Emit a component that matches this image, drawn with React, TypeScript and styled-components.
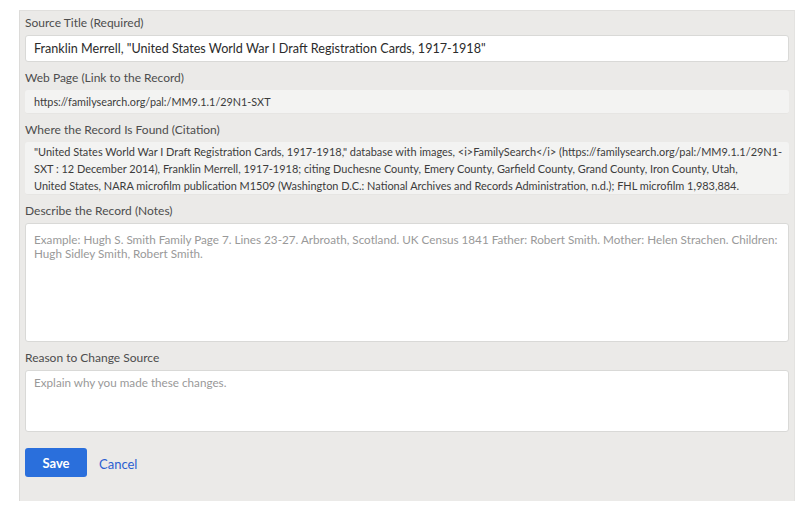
import React from 'react'
import styled, { createGlobalStyle } from 'styled-components'

const GlobalStyle = createGlobalStyle`
  html, body {
    margin: 0;
    padding: 0;
    background: #fff;
    font-family: Lato, "Open Sans", "Liberation Sans", sans-serif;
  }
`

const citationLines = [
  '"United States World War I Draft Registration Cards, 1917-1918," database with images, <i>FamilySearch</i> (https://familysearch.org/pal:/MM9.1.1/29N1-',
  'SXT : 12 December 2014), Franklin Merrell, 1917-1918; citing Duchesne County, Emery County, Garfield County, Grand County, Iron County, Utah,',
  'United States, NARA microfilm publication M1509 (Washington D.C.: National Archives and Records Administration, n.d.); FHL microfilm 1,983,884.',
]

const EditSource = () => {
  return (
    <Panel>
      <Field>
        <Label>Source Title (Required)</Label>
        <TextInput
          defaultValue={'Franklin Merrell, "United States World War I Draft Registration Cards, 1917-1918"'}
        />
      </Field>

      <Field>
        <Label>Web Page (Link to the Record)</Label>
        <ReadOnly>https://familysearch.org/pal:/MM9.1.1/29N1-SXT</ReadOnly>
      </Field>

      <Field>
        <Label>Where the Record Is Found (Citation)</Label>
        <ReadOnly multiline>
          {citationLines.map((line) => (
            <CitationLine key={line}>{line}</CitationLine>
          ))}
        </ReadOnly>
      </Field>

      <Field>
        <Label>Describe the Record (Notes)</Label>
        <TextArea
          height={119}
          padTop={8}
          placeholder="Example: Hugh S. Smith Family Page 7. Lines 23-27. Arbroath, Scotland. UK Census 1841 Father: Robert Smith. Mother: Helen Strachen. Children: Hugh Sidley Smith, Robert Smith."
        />
      </Field>

      <Field>
        <Label>Reason to Change Source</Label>
        <TextArea height={62} padTop={4} placeholder="Explain why you made these changes." />
      </Field>

      <Actions>
        <SaveButton type="button">Save</SaveButton>
        <CancelLink href="#">Cancel</CancelLink>
      </Actions>
    </Panel>
  )
}

export default function App() {
  return (
    <>
      <GlobalStyle />
      <EditSource />
    </>
  )
}

const Panel = styled.section`
  box-sizing: border-box;
  margin: 10px 0 0 19px;
  width: 776px;
  height: 491px;
  padding: 4px 5px 0 5px;
  background: #ebeae8;
  border-top: 1px solid #e0dfdd;
  border-left: 1px solid #dcdbd9;
  border-right: 1px solid #e4e3e1;
  display: flex;
  flex-direction: column;
`

const Field = styled.div`
  display: flex;
  flex-direction: column;
  margin-bottom: 8px;
`

const Label = styled.label`
  font-size: 12px;
  line-height: 16px;
  color: #4d4d4d;
  margin-bottom: 4px;
`

const TextInput = styled.input`
  box-sizing: border-box;
  height: 27px;
  width: 100%;
  padding: 0 8px;
  border: 1px solid #d9d9d7;
  border-radius: 3px;
  background: #fff;
  font-family: inherit;
  font-size: 12.6px;
  color: #2b2b2b;
  outline: none;
`

const ReadOnly = styled.div<{ multiline?: boolean }>`
  box-sizing: border-box;
  min-height: 23px;
  padding: ${(p) => (p.multiline ? '1px 4px 0 9px' : '4px 9px')};
  border-radius: 3px;
  background: #f3f3f2;
  border-bottom: 1px solid #e6e5e3;
  font-size: ${(p) => (p.multiline ? '10.95px' : '10.8px')};
  line-height: ${(p) => (p.multiline ? '17px' : '15px')};
  color: #3c3c3c;
`

const CitationLine = styled.span`
  display: block;
  white-space: nowrap;
`

const TextArea = styled.textarea<{ height: number; padTop: number }>`
  box-sizing: border-box;
  height: ${(p) => p.height}px;
  width: 100%;
  padding: ${(p) => p.padTop}px 4px 6px 8px;
  border: 1px solid #d9d9d7;
  border-radius: 3px;
  background: #fff;
  font-family: inherit;
  font-size: 11.7px;
  line-height: 14px;
  color: #333;
  resize: none;
  outline: none;

  &::placeholder {
    color: #999;
  }
`

const Actions = styled.div`
  display: flex;
  align-items: center;
  gap: 12px;
  margin-top: 8px;
`

const SaveButton = styled.button`
  width: 62px;
  height: 29px;
  border: none;
  border-radius: 3px;
  background: #2a6fdc;
  color: #fff;
  font-family: inherit;
  font-size: 13px;
  font-weight: 700;
  cursor: pointer;
`

const CancelLink = styled.a`
  color: #2c5fd1;
  font-size: 13px;
  text-decoration: none;
  margin-top: 3px;
`
